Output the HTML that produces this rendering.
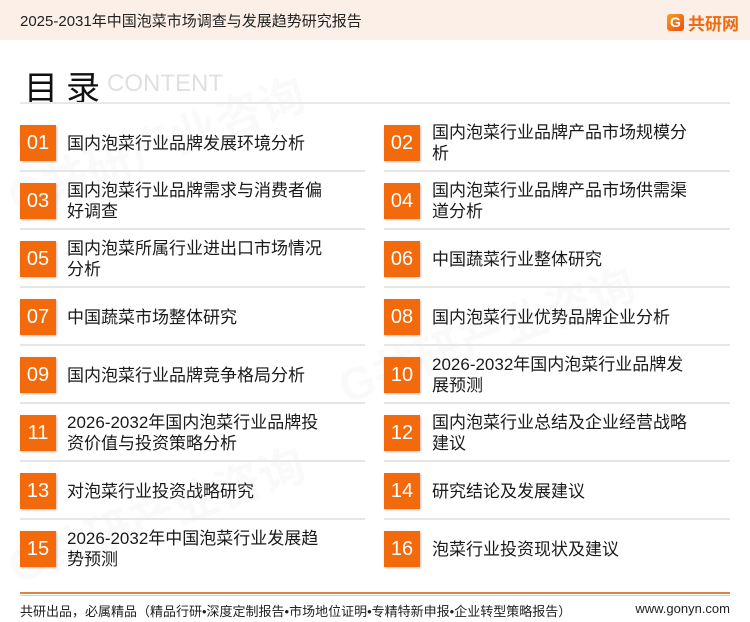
<!DOCTYPE html>
<html><head><meta charset="utf-8"><style>
*{margin:0;padding:0;box-sizing:border-box}
body{width:750px;height:622px;background:#fff;position:relative;overflow:hidden;font-family:"Liberation Sans","Noto Sans CJK SC",sans-serif;color:#1a1a1a}
.hdr{position:absolute;left:0;top:0;width:750px;height:40px;background:#fcefe8}
.hdr .t{position:absolute;left:20px;top:10px;font-size:15px;color:#222}
.logo{position:absolute;left:667px;top:10px;font-size:17px;font-weight:bold;color:#f06a10;display:flex;align-items:center}
.logo .g{width:17px;height:17px;margin-right:4px;border-radius:3px;background:linear-gradient(135deg,#f7a020,#ee4a10);color:#fff;font-size:14px;line-height:17px;text-align:center}
.ttl{position:absolute;left:24px;top:61px;font-size:34px;color:#111;letter-spacing:8px}
.ct{position:absolute;left:107px;top:70px;font-size:24px;color:#e0e0e0;font-family:"Liberation Sans",sans-serif}
.hl{position:absolute;left:20px;top:102px;width:710px;height:2px;background:#e8e8e8}
.box{position:absolute;width:36px;height:36px;background:#f26a0b;color:#fff;font-size:20px;line-height:36px;text-align:center;box-shadow:1px 1px 2px rgba(0,0,0,.25)}
.tx{position:absolute;width:268px;font-size:17px;line-height:21px;display:flex;align-items:center;height:44px;color:#1a1a1a}
.sep{position:absolute;height:2px;background:#e6e6e6}
.fl{position:absolute;left:20px;top:592px;width:710px;height:2px;background:#d9834a}
.fl2{position:absolute;left:20px;top:595px;width:710px;height:1px;background:#f0c8a8}
.ft{position:absolute;left:20px;top:601px;font-size:13px;color:#222}
.fr{position:absolute;right:20px;top:601px;font-size:13px;color:#222}
.wm{position:absolute;color:rgba(0,0,0,.018);font-size:46px;font-weight:bold;transform:rotate(-20deg);white-space:nowrap}
</style></head><body>
<div class="wm" style="left:0;top:110px">G共研产业咨询</div>
<div class="wm" style="left:330px;top:300px">G共研产业咨询</div>
<div class="wm" style="left:0;top:480px">G共研产业咨询</div>
<div class="hdr"><div class="t">2025-2031年中国泡菜市场调查与发展趋势研究报告</div>
<div class="logo"><div class="g">G</div>共研网</div></div>
<div class="ttl">目录</div><div class="ct">CONTENT</div>
<div class="hl"></div>

<div class="box" style="left:20px;top:125px">01</div><div class="tx" style="left:67px;top:121px">国内泡菜行业品牌发展环境分析</div><div class="sep" style="left:20px;width:345px;top:170px"></div>
<div class="box" style="left:384px;top:125px">02</div><div class="tx" style="left:432px;top:121px">国内泡菜行业品牌产品市场规模分析</div><div class="sep" style="left:384px;width:346px;top:170px"></div>

<div class="box" style="left:20px;top:183px">03</div><div class="tx" style="left:67px;top:179px">国内泡菜行业品牌需求与消费者偏好调查</div><div class="sep" style="left:20px;width:345px;top:228px"></div>
<div class="box" style="left:384px;top:183px">04</div><div class="tx" style="left:432px;top:179px">国内泡菜行业品牌产品市场供需渠道分析</div><div class="sep" style="left:384px;width:346px;top:228px"></div>

<div class="box" style="left:20px;top:241px">05</div><div class="tx" style="left:67px;top:237px">国内泡菜所属行业进出口市场情况分析</div><div class="sep" style="left:20px;width:345px;top:286px"></div>
<div class="box" style="left:384px;top:241px">06</div><div class="tx" style="left:432px;top:237px">中国蔬菜行业整体研究</div><div class="sep" style="left:384px;width:346px;top:286px"></div>

<div class="box" style="left:20px;top:299px">07</div><div class="tx" style="left:67px;top:295px">中国蔬菜市场整体研究</div><div class="sep" style="left:20px;width:345px;top:344px"></div>
<div class="box" style="left:384px;top:299px">08</div><div class="tx" style="left:432px;top:295px">国内泡菜行业优势品牌企业分析</div><div class="sep" style="left:384px;width:346px;top:344px"></div>

<div class="box" style="left:20px;top:357px">09</div><div class="tx" style="left:67px;top:353px">国内泡菜行业品牌竞争格局分析</div><div class="sep" style="left:20px;width:345px;top:402px"></div>
<div class="box" style="left:384px;top:357px">10</div><div class="tx" style="left:432px;top:353px">2026-2032年国内泡菜行业品牌发展预测</div><div class="sep" style="left:384px;width:346px;top:402px"></div>

<div class="box" style="left:20px;top:415px">11</div><div class="tx" style="left:67px;top:411px">2026-2032年国内泡菜行业品牌投资价值与投资策略分析</div><div class="sep" style="left:20px;width:345px;top:460px"></div>
<div class="box" style="left:384px;top:415px">12</div><div class="tx" style="left:432px;top:411px">国内泡菜行业总结及企业经营战略建议</div><div class="sep" style="left:384px;width:346px;top:460px"></div>

<div class="box" style="left:20px;top:473px">13</div><div class="tx" style="left:67px;top:469px">对泡菜行业投资战略研究</div><div class="sep" style="left:20px;width:345px;top:518px"></div>
<div class="box" style="left:384px;top:473px">14</div><div class="tx" style="left:432px;top:469px">研究结论及发展建议</div><div class="sep" style="left:384px;width:346px;top:518px"></div>

<div class="box" style="left:20px;top:531px">15</div><div class="tx" style="left:67px;top:527px">2026-2032年中国泡菜行业发展趋势预测</div>
<div class="box" style="left:384px;top:531px">16</div><div class="tx" style="left:432px;top:527px">泡菜行业投资现状及建议</div>

<div class="fl"></div><div class="fl2"></div>
<div class="ft">共研出品，必属精品（精品行研•深度定制报告•市场地位证明•专精特新申报•企业转型策略报告）</div>
<div class="fr">www.gonyn.com</div>
</body></html>
